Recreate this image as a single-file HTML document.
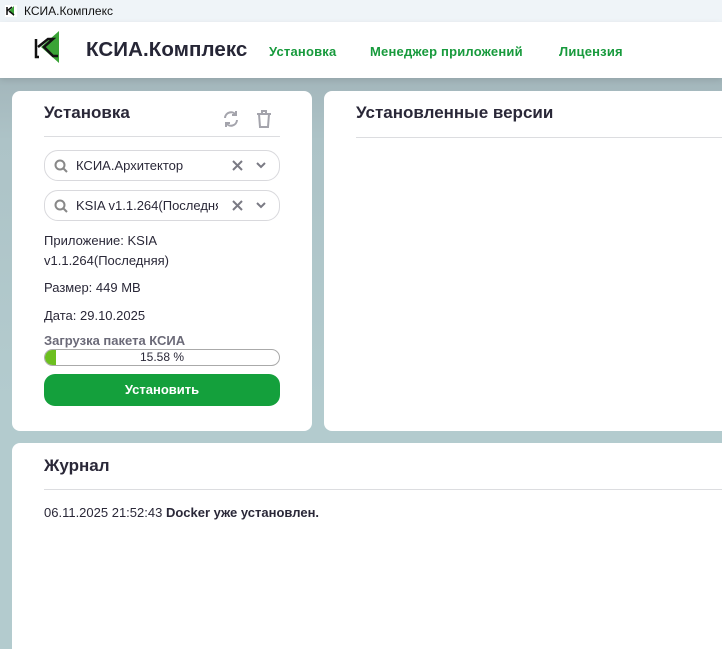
<!DOCTYPE html>
<html><head><meta charset="utf-8"><style>
*{box-sizing:border-box;margin:0;padding:0}
html,body{width:722px;height:649px;overflow:hidden}
body{font-family:"Liberation Sans","Noto Sans CJK SC",sans-serif;background:linear-gradient(180deg,#a3b6bb 78px,#adc3c7 140px,#b3cbce 400px,#b3cbce);position:relative;color:#2a2838}
.tb{position:absolute;left:0;top:0;width:722px;height:22px;background:#eff4f8;font-size:12px;line-height:22px;padding-left:24px;color:#111}
.hd{position:absolute;left:0;top:22px;width:722px;height:56px;background:#fff;box-shadow:0 2px 6px rgba(0,0,0,.1)}
.brand{position:absolute;left:86px;top:16px;font-size:20.5px;font-weight:bold;color:#262636;letter-spacing:0.1px}
.nav{position:absolute;top:22px;font-size:13px;font-weight:bold;color:#179a3c;letter-spacing:0.2px}
.card{position:absolute;background:#fff;border-radius:8px}
.h{position:absolute;font-size:17px;font-weight:bold;color:#2a2838}
.line{position:absolute;height:1px;background:#dcdde0}
.sel{position:absolute;left:32px;width:236px;height:31px;border:1px solid #d9d9dd;border-radius:14px;font-size:13px;line-height:29px;padding-left:31px;color:#2a2838}
.sel span{display:block;width:142px;overflow:hidden;white-space:nowrap}
.t{position:absolute;left:32px;font-size:13px;color:#2a2838;line-height:20px}
</style></head><body>
<div class="tb"><svg style="position:absolute;left:5px;top:5px" width="12" height="12"><rect width="12" height="12" fill="#fff"/><polygon points="9,1 9,11 4,6" fill="#3aa336"/><path d="M2 2v8M2 6l5-4M4 6l5 4" stroke="#111" stroke-width="1.5" fill="none"/></svg>КСИА.Комплекс</div>
<div class="hd">
<svg style="position:absolute;left:33px;top:9px" width="28" height="32" viewBox="0 0 28 32"><polygon points="26,0 26,32 8,16" fill="#3aa336"/><path d="M3 8v18h3" stroke="#111" stroke-width="2.5" fill="none"/><path d="M5 16L15 8h5L11 16l9 9h5" stroke="#111" stroke-width="2.5" fill="none"/></svg>
<div class="brand">КСИА.Комплекс</div>
<div class="nav" style="left:269px">Установка</div>
<div class="nav" style="left:370px">Менеджер приложений</div>
<div class="nav" style="left:559px">Лицензия</div>
</div>
<div class="card" style="left:12px;top:91px;width:300px;height:340px">
<div class="h" style="left:32px;top:12px">Установка</div>
<svg style="position:absolute;left:210px;top:19px" width="18" height="18" viewBox="0 0 18 18" fill="none" stroke="#a4a4ac" stroke-width="2"><path d="M3 8a6 6 0 0 1 11-3M15 10a6 6 0 0 1-11 3"/><path d="M14 1v4h-4M4 17v-4h4"/></svg>
<svg style="position:absolute;left:244px;top:19px" width="16" height="18" viewBox="0 0 16 18" fill="none" stroke="#a4a4ac" stroke-width="2"><path d="M1 4h14M6 4V1h4v3M3 4l1 13h8l1-13"/></svg>
<div class="line" style="left:32px;top:45px;width:236px"></div>
<div class="sel" style="top:59px"><span>КСИА.Архитектор</span></div>
<div class="sel" style="top:99px"><span>KSIA v1.1.264(Последняя</span></div>
<svg style="position:absolute;left:42px;top:68px" width="14" height="14" fill="none" stroke="#888" stroke-width="2"><circle cx="6" cy="6" r="4.5"/><path d="M9.5 9.5L13 13"/></svg>
<svg style="position:absolute;left:42px;top:108px" width="14" height="14" fill="none" stroke="#888" stroke-width="2"><circle cx="6" cy="6" r="4.5"/><path d="M9.5 9.5L13 13"/></svg>
<svg style="position:absolute;left:219px;top:69px" width="54" height="12" fill="none" stroke="#7a7a84" stroke-width="2"><path d="M2 1l9 9M11 1l-9 9M26 3l4 4 4-4"/></svg>
<svg style="position:absolute;left:219px;top:109px" width="54" height="12" fill="none" stroke="#7a7a84" stroke-width="2"><path d="M2 1l9 9M11 1l-9 9M26 3l4 4 4-4"/></svg>
<div class="t" style="top:140px">Приложение: KSIA<br>v1.1.264(Последняя)</div>
<div class="t" style="top:187px">Размер: 449 MB</div>
<div class="t" style="top:215px">Дата: 29.10.2025</div>
<div class="t" style="top:240px;font-weight:bold;color:#6b6a78">Загрузка пакета КСИА</div>
<div style="position:absolute;left:32px;top:258px;width:236px;height:17px;border:1px solid #aaa;border-radius:9px;overflow:hidden;font-size:12px;text-align:center;line-height:15px">
<div style="position:absolute;left:0;top:0;width:11px;height:15px;background:#6cbf1f"></div><span style="position:relative">15.58 %</span></div>
<div style="position:absolute;left:32px;top:283px;width:236px;height:32px;background:#14a03c;border-radius:11px;color:#fff;font-weight:bold;font-size:13px;text-align:center;line-height:32px">Установить</div>
</div>
<div class="card" style="left:324px;top:91px;width:410px;height:340px">
<div class="h" style="left:32px;top:12px">Установленные версии</div>
<div class="line" style="left:32px;top:46px;width:380px"></div>
</div>
<div class="card" style="left:12px;top:443px;width:722px;height:220px">
<div class="h" style="left:32px;top:13px">Журнал</div>
<div class="line" style="left:32px;top:46px;width:690px"></div>
<div class="t" style="top:60px">06.11.2025 21:52:43 <b>Docker уже установлен.</b></div>
</div>
</body></html>
